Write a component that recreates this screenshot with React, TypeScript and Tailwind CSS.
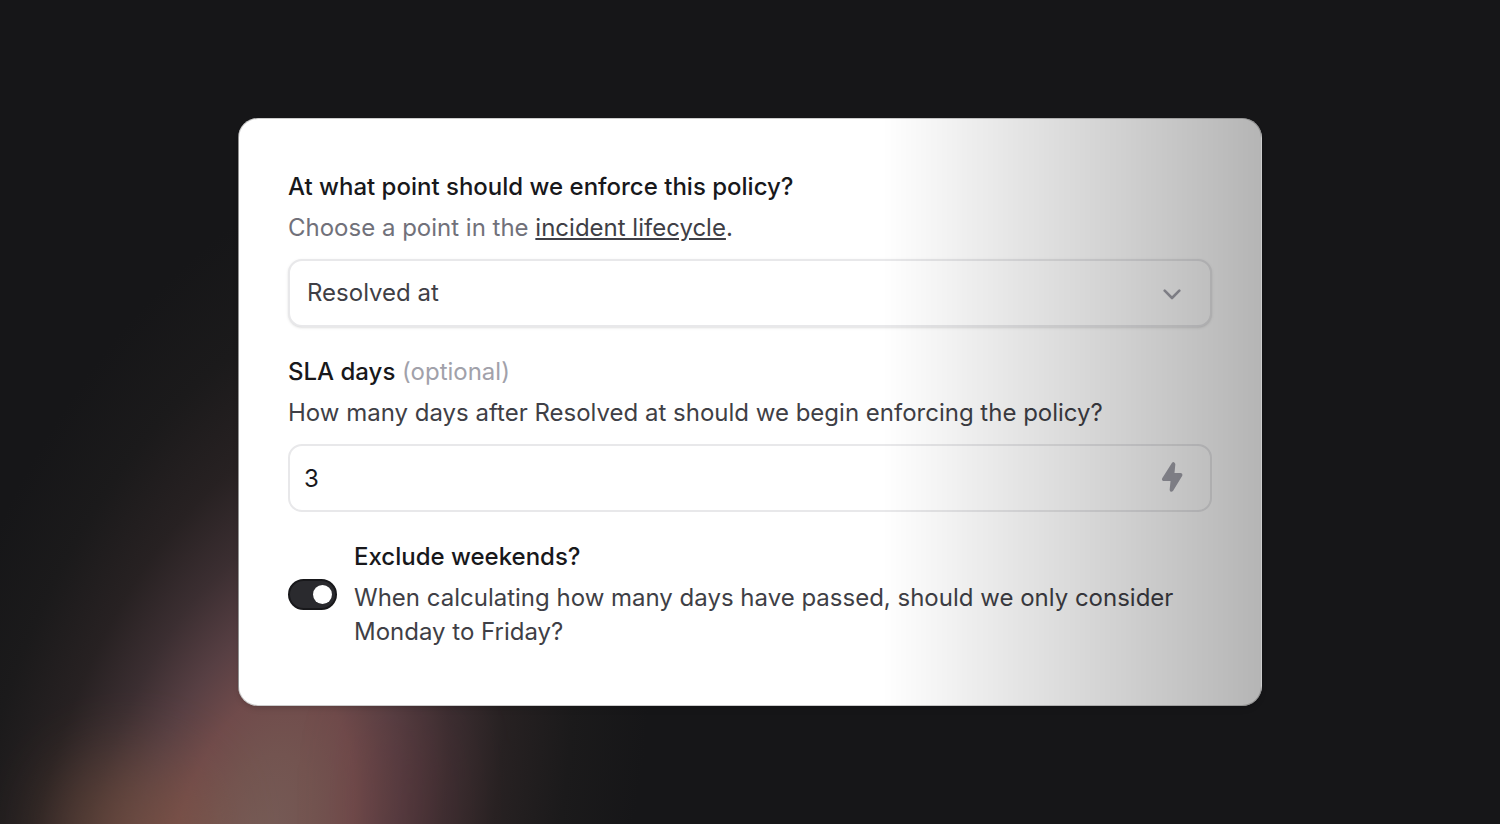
import { useState } from 'react';
import type { ReactNode } from 'react';

interface FieldProps {
  id: string;
  label: string;
  optional?: boolean;
  description: ReactNode;
  children: ReactNode;
}

function Field({ id, label, optional, description, children }: FieldProps) {
  return (
    <div>
      <label htmlFor={id} className="block font-medium text-[#18181b]">
        {label}
        {optional && <span className="font-normal text-[#a1a1aa]"> (optional)</span>}
      </label>
      <div className="mt-[7px] text-[#3f3f46]">{description}</div>
      <div className="relative mt-[14px]">{children}</div>
    </div>
  );
}

function ChevronIcon() {
  return (
    <svg className="pointer-events-none absolute right-[31px] top-[30px] h-[11px] w-[18px]" viewBox="0 0 18 11" fill="none" stroke="#a1a1aa" strokeWidth="2.6" strokeLinecap="round" strokeLinejoin="round">
      <path d="M1.7 1.7L9 9l7.3-7.3" />
    </svg>
  );
}

function BoltIcon() {
  return (
    <svg className="h-8 w-[22px]" viewBox="0 0 66 96" fill="#a1a1aa" stroke="#a1a1aa" strokeWidth="8" strokeLinejoin="round">
      <path d="M36 8L7 54Q6 56 9 56H33L30 86Q30 90 33 87L60 43Q61 40 58 40H36L39 10Q38 6 36 8Z" />
    </svg>
  );
}

function App() {
  const [point, setPoint] = useState('Resolved at');
  const [days, setDays] = useState('3');
  const [excludeWeekends, setExcludeWeekends] = useState(true);

  return (
    <div className="relative flex min-h-screen items-center justify-center overflow-hidden bg-[#161618] font-['Inter',sans-serif] text-2xl leading-[34px]">
      {/* Background glow */}
      <div className="absolute -bottom-[726px] -left-[100px] h-[1400px] w-[720px] rotate-15 bg-[radial-gradient(closest-side,#765c57_0%,#735450_14%,#704b4b_24%,#573f43_35%,#3b2e31_48%,#272122_62%,#1b1a1b_80%,#16161800_100%)]"></div>
      <div className="absolute -bottom-20 left-[50px] h-[150px] w-[160px] rounded-full bg-[#8a5c40] opacity-40 blur-[36px]"></div>
      <div className="absolute -bottom-20 left-[370px] h-[200px] w-[80px] rounded-full bg-[#5c2a30] opacity-25 blur-[36px]"></div>

      {/* Policy card */}
      <form className="relative w-full max-w-[1024px] rounded-[20px] bg-white px-[50px] pb-[57px] pt-[52px] shadow-md">
        <div className="space-y-7">
          <Field
            id="point"
            label="At what point should we enforce this policy?"
            description={
              <>
                <span className="text-[#71717a]">Choose a point in the </span>
                <a href="#lifecycle" className="underline">incident lifecycle</a>.
              </>
            }
          >
            <select
              id="point"
              value={point}
              onChange={(e) => setPoint(e.target.value)}
              className="block h-[68px] w-full appearance-none rounded-[14px] border-2 border-[#e8e8ea] bg-white px-[17px] text-[#3f3f46] shadow-sm"
            >
              <option>Resolved at</option>
              <option>Closed at</option>
            </select>
            <ChevronIcon />
          </Field>

          <Field
            id="days"
            label="SLA days"
            optional
            description={`How many days after ${point} should we begin enforcing the policy?`}
          >
            <input
              id="days"
              type="text"
              inputMode="numeric"
              value={days}
              onChange={(e) => setDays(e.target.value)}
              className="block h-[68px] w-full rounded-[14px] border-2 border-[#e8e8ea] bg-white px-[14px] text-[#18181b]"
            />
            <button type="button" aria-label="Use expression" className="absolute right-[29px] top-[17px]">
              <BoltIcon />
            </button>
          </Field>

          <div className="flex items-center gap-[17px]">
            <input
              id="weekends"
              type="checkbox"
              role="switch"
              checked={excludeWeekends}
              onChange={(e) => setExcludeWeekends(e.target.checked)}
              className="flex h-[31px] w-[49px] shrink-0 appearance-none items-center rounded-full border-2 border-[#18181b] bg-[#d4d4d8] px-[3px] before:size-[19px] before:rounded-full before:bg-white checked:justify-end checked:bg-[#2a2a2e]"
            />
            <label htmlFor="weekends">
              <span className="block font-medium text-[#18181b]">Exclude weekends?</span>
              <span className="mt-[7px] block text-[#3f3f46]">
                When calculating how many days have passed, should we only consider Monday to Friday?
              </span>
            </label>
          </div>
        </div>

        {/* Side shade and edge line */}
        <div className="pointer-events-none absolute inset-0 rounded-[20px] border border-black/20 bg-linear-to-r from-black/0 from-63% to-black/29"></div>
      </form>
    </div>
  );
}

export default App;
